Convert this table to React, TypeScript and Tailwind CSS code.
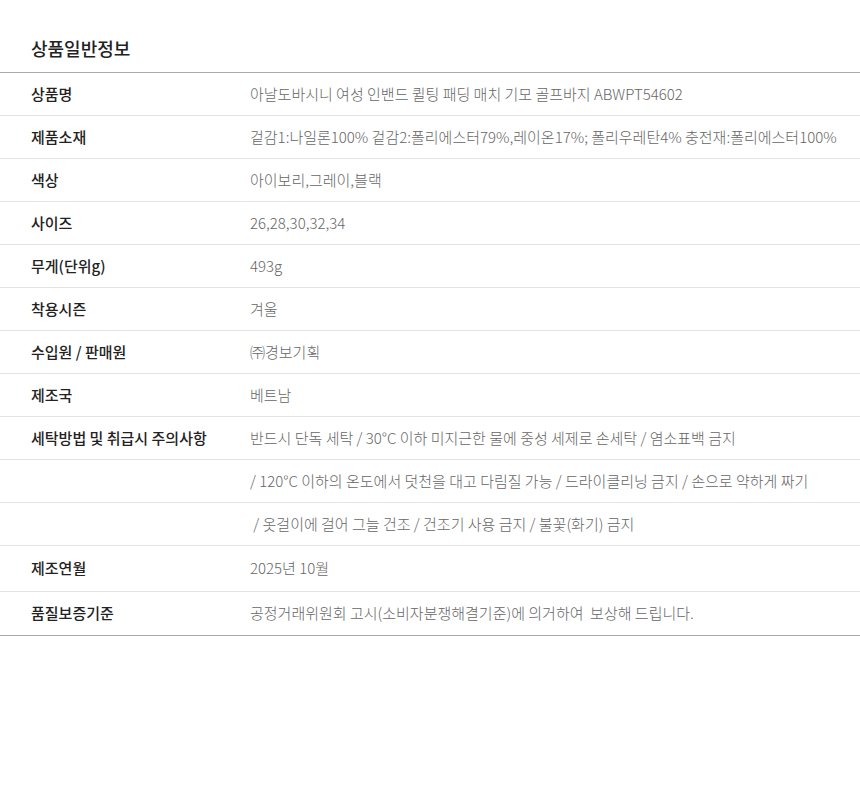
import React from "react";

const rows: { label: string; value: string; h?: string }[] = [
  { label: "상품명", value: "아날도바시니 여성 인밴드 퀼팅 패딩 매치 기모 골프바지 ABWPT54602" },
  { label: "제품소재", value: "겉감1:나일론100% 겉감2:폴리에스터79%,레이온17%; 폴리우레탄4% 충전재:폴리에스터100%" },
  { label: "색상", value: "아이보리,그레이,블랙" },
  { label: "사이즈", value: "26,28,30,32,34" },
  { label: "무게(단위g)", value: "493g" },
  { label: "착용시즌", value: "겨울" },
  { label: "수입원 / 판매원", value: "㈜경보기획" },
  { label: "제조국", value: "베트남" },
  { label: "세탁방법 및 취급시 주의사항", value: "반드시 단독 세탁 / 30°C 이하 미지근한 물에 중성 세제로 손세탁 / 염소표백 금지" },
  { label: "", value: "/ 120°C 이하의 온도에서 덧천을 대고 다림질 가능 / 드라이클리닝 금지 / 손으로 약하게 짜기" },
  { label: "", value: " / 옷걸이에 걸어 그늘 건조 / 건조기 사용 금지 / 불꽃(화기) 금지" },
  { label: "제조연월", value: "2025년 10월", h: "h-[46px] border-b border-[#e3e3e3]" },
  { label: "품질보증기준", value: "공정거래위원회 고시(소비자분쟁해결기준)에 의거하여  보상해 드립니다.", h: "h-[44px] border-b border-[#aaaaaa]" },
];

export default function App() {
  return (
    <div
      className="w-[860px] h-[786px] bg-white"
      style={{ fontFamily: '"Noto Sans CJK KR", "Noto Sans", sans-serif' }}
    >
      <div className="pt-[36px] pb-[12px] pl-[31px] border-b border-[#aaaaaa]">
        <h2 className="text-[18px] leading-[24px] font-medium text-[#222222]">상품일반정보</h2>
      </div>
      {rows.map((r, i) => (
        <div
          key={i}
          className={`flex items-center ${r.h ?? "h-[43px] border-b border-[#e3e3e3]"}`}
        >
          <div className="w-[250px] shrink-0 pl-[31px] text-[15px] font-medium text-[#222222]">
            {r.label}
          </div>
          <div className="text-[15px] font-light text-[#666666] whitespace-pre">{r.value}</div>
        </div>
      ))}
    </div>
  );
}
